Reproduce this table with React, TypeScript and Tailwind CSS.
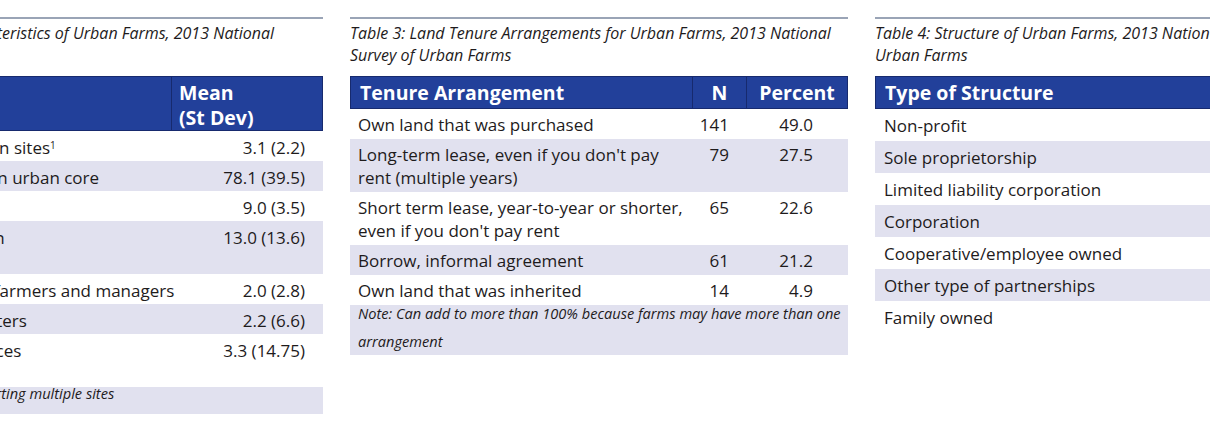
import React from "react";

const BLUE = "bg-[#22409a]";

function Title({ l1, l2 }: { l1: string; l2: string }) {
  return (
    <div className="border-t-2 border-[#9aa4b6] pt-[3px] mb-[10px]">
      <p className="italic text-[16px] leading-[22px] text-[#1e1b1c] whitespace-nowrap">{l1}</p>
      <p className="italic text-[16px] leading-[22px] text-[#1e1b1c] whitespace-nowrap">{l2}</p>
    </div>
  );
}

function Table1() {
  const rows: [React.ReactNode, string][] = [
    [<>Number of own urban sites<sup className="text-[10px]">1</sup></>, "3.1 (2.2)"],
    [<>Percent of net sales in urban core</>, "78.1 (39.5)"],
    [<>Years in operation</>, "9.0 (3.5)"],
    [<>Total years farming in<br />any setting</>, "13.0 (13.6)"],
    [<>Number of full-time farmers and managers</>, "2.0 (2.8)"],
    [<>Number of seed starters</>, "2.2 (6.6)"],
    [<>Number of sales spaces<br />(markets, CSAs)</>, "3.3 (14.75)"],
  ];
  return (
    <div className="w-[498px] shrink-0">
      <Title l1="Table 2: Selected Characteristics of Urban Farms, 2013 National" l2="Survey of Urban Farms" />
      <div className={`flex h-[55px] ${BLUE} border border-[#172a6e] text-white font-bold text-[19.5px] leading-[25px]`}>
        <div className="w-[346px] border-r border-[#172a6e] pl-[9px] pt-[3px]">Characteristic</div>
        <div className="flex-1 pl-[7px] pt-[3px]">Mean<br />(St Dev)</div>
      </div>
      {rows.map(([label, val], i) => (
        <div key={i} className={`flex text-[17px] leading-[23px] text-[#1e1b1c] pt-[5px] pb-[2px] ${i % 2 === 1 ? "bg-[#e1e1ef]" : "bg-white"}`}>
          <div className="w-[347px] pl-[8px] whitespace-nowrap">{label}</div>
          <div className="flex-1 text-right pr-[18px] whitespace-nowrap">{val}</div>
        </div>
      ))}
      <div className="h-[27px] bg-[#e1e1ef] italic text-[14.6px] text-[#1e1b1c] overflow-hidden">
        <p className="leading-[28px] -mt-[8px] pl-[8px] whitespace-nowrap">Note: <sup className="text-[8px]">1</sup>Among farms reporting multiple sites</p>
      </div>
    </div>
  );
}

function Table3() {
  const rows: [React.ReactNode, string, string][] = [
    [<>Own land that was purchased</>, "141", "49.0"],
    [<>Long-term lease, even if you don't pay<br />rent (multiple years)</>, "79", "27.5"],
    [<>Short term lease, year-to-year or shorter,<br />even if you don't pay rent</>, "65", "22.6"],
    [<>Borrow, informal agreement</>, "61", "21.2"],
    [<>Own land that was inherited</>, "14", "4.9"],
  ];
  return (
    <div className="w-[498px] shrink-0">
      <Title l1="Table 3: Land Tenure Arrangements for Urban Farms, 2013 National" l2="Survey of Urban Farms" />
      <div className={`flex h-[33px] ${BLUE} border border-[#172a6e] text-white font-bold text-[19.5px] leading-[31px]`}>
        <div className="w-[342px] border-r border-[#172a6e] pl-[9px] whitespace-nowrap">Tenure Arrangement</div>
        <div className="w-[54px] border-r border-[#172a6e] text-center">N</div>
        <div className="flex-1 text-center">Percent</div>
      </div>
      {rows.map(([label, n, p], i) => (
        <div key={i} className={`flex text-[17px] leading-[23px] text-[#1e1b1c] pt-[4px] pb-[3px] ${i % 2 === 1 ? "bg-[#e1e1ef]" : "bg-white"}`}>
          <div className="w-[343px] pl-[8px] whitespace-nowrap">{label}</div>
          <div className="w-[54px] text-right pr-[18px]">{n}</div>
          <div className="flex-1 text-right pr-[35px]">{p}</div>
        </div>
      ))}
      <div className="h-[50px] bg-[#e1e1ef] italic text-[14.6px] text-[#1e1b1c] overflow-hidden">
        <p className="leading-[28px] -mt-[6px] pl-[8px]">Note: Can add to more than 100% because farms may have more than one arrangement</p>
      </div>
    </div>
  );
}

function Table4() {
  const rows: string[] = [
    "Non-profit",
    "Sole proprietorship",
    "Limited liability corporation",
    "Corporation",
    "Cooperative/employee owned",
    "Other type of partnerships",
    "Family owned",
  ];
  return (
    <div className="w-[498px] shrink-0">
      <Title l1="Table 4: Structure of Urban Farms, 2013 National Survey of" l2="Urban Farms" />
      <div className={`flex h-[33px] ${BLUE} border border-[#172a6e] text-white font-bold text-[19.5px] leading-[31px]`}>
        <div className="w-[342px] border-r border-[#172a6e] pl-[9px] whitespace-nowrap">Type of Structure</div>
        <div className="w-[54px] border-r border-[#172a6e] text-center">N</div>
        <div className="flex-1 text-center">Percent</div>
      </div>
      {rows.map((label, i) => (
        <div key={i} className={`flex h-[32px] items-center text-[17px] leading-[23px] text-[#1e1b1c] ${i % 2 === 1 ? "bg-[#e1e1ef]" : "bg-white"}`}>
          <div className="w-[343px] pl-[9px] whitespace-nowrap">{label}</div>
        </div>
      ))}
    </div>
  );
}

export default function App() {
  return (
    <div className="w-[1210px] h-[423px] overflow-hidden bg-white font-['Open_Sans',sans-serif]">
      <div className="flex gap-[27px] -ml-[175px] pt-[17px]">
        <Table1 />
        <Table3 />
        <Table4 />
      </div>
    </div>
  );
}
